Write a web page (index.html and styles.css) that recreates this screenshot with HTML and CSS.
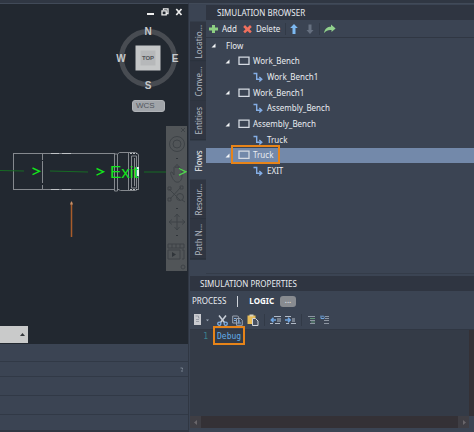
FILE: index.html
```html
<!DOCTYPE html>
<html lang="en">
<head>
<meta charset="utf-8">
<title>Simulation</title>
<link rel="stylesheet" href="styles.css">
</head>
<body>
<svg class="defs" aria-hidden="true">
  <symbol id="station" viewBox="0 0 12 10"><path d="M1 1.2h10v7.2H1z" fill="none" stroke="#d5dae2" stroke-width="1.3"/></symbol>
  <symbol id="route" viewBox="0 0 10 10"><path d="M.5 1.5h3.2v5.7h4.5M6.3 4.9 8.8 7.2 6.3 9.500" fill="none" stroke="#84aee6" stroke-width="1.4"/></symbol>
  <symbol id="caret" viewBox="0 0 5 5"><path d="M4.500.500v4H.5z" fill="#f4f6f8"/></symbol>
</svg>
<div class="app">
  <main class="left">
    <section class="canvas" aria-label="Drawing">
      <svg class="drawing" width="188" height="340" viewBox="0 4 188 340">
        <g fill="none" stroke="#85898e">
          <path d="M13.500 153.500H115M13.500 189.500H115M13.500 153v37" stroke-width="1"/>
          <path d="M42.500 154v6M42.500 161v22M42.500 185v5"/>
          <path d="M51 153.500h8M62 153.500h9M51 189.500h8M62 189.500h9" stroke="#c0c3c6"/>
          <path d="M114.500 154v37h3v-37zM117.500 154l2-1.500h16l3 2v5M117.500 189l3 1.500h15l3-1.500v-4" />
          <path d="M128.500 153v38M131.500 156h5v32h-5zM134.500 158v28M138.500 157v33" />
          <path d="M130 153.500h7M130 189.500h7" stroke-dasharray="2 1" stroke="#b8bbbe"/>
        </g>
        <path d="M0 170.500 24 171M50 171l38 1M144 172h25" fill="none" stroke="#176b24"/>
        <path d="M137 167h2v9h-2z" fill="#e8f5e8"/>
        <path d="M71.500 202v35" stroke="#a85c2b" stroke-width="1.500"/><path d="M70 204.500 71.500 201l1.500 3.500z" fill="#c8926a"/>
        <path d="M32.500 168l7 3.300-7 3.300M96.500 168.500l7 3.300-7 3.300" fill="none" stroke="#14e61c" stroke-width="1.400"/>
        <text class="exit" x="110" y="178">Exit</text>
      </svg>
      <div class="window-buttons">
        <button aria-label="Minimize"><svg width="8" height="8" viewBox="0 0 8 8"><path d="M0 5h7v2H0z" fill="#eee"/></svg></button>
        <button aria-label="Restore"><svg width="8" height="8" viewBox="0 0 8 8"><path d="M2.500 2V.8H7v4.700H5.500M1 2.800h4.200v4H1z" fill="none" stroke="#eee" stroke-width="1.300"/></svg></button>
        <button aria-label="Close"><svg width="8" height="8" viewBox="0 0 8 8"><path d="M1.300 1 6.500 7M6.500 1 1.300 7" stroke="#eee" stroke-width="1.700"/></svg></button>
      </div>
      <svg class="compass" width="66" height="66" viewBox="0 0 66 66">
        <circle cx="33" cy="33" r="26.500" fill="none" stroke="#484c52" stroke-width="5"/>
        <path d="M20.500 20.500h25v25h-25z" fill="#c5c7c8"/><path d="M25.500 25.500h15v15h-15z" fill="#b6b8ba"/>
        <g class="directions"><text x="33" y="10">N</text><text x="33" y="64">S</text><text x="6" y="37">W</text><text x="60" y="37">E</text></g>
        <text class="face" x="33" y="35">TOP</text>
      </svg>
      <button class="wcs">WCS</button>
      <svg class="navbar" width="21" height="145" viewBox="0 0 21 145" role="img" aria-label="Navigation bar">
        <path d="M0 0h21v145H0z" fill="#515558"/>
        <g fill="none" stroke="#3e4347" stroke-width="1">
          <path d="M15 2l4 4M19 2l-4 4"/>
          <circle cx="11" cy="18" r="7.500"/><circle cx="11" cy="18" r="4"/>
          <path d="M6 51c-2-4-2-5 0-5l2 3v-7c0-2 2-2 2 0v-2c0-2 2-2 2 0v2c0-2 2-2 2 0v2c0-2 2-1 2 0v6c0 7-7 9-10 1z"/>
          <path d="M3 63l11 11M15 61 4 73M2 61h3v3H2zM14 60h3v3h-3zM2 72h3v3H2z"/><circle cx="14" cy="71" r="3.500"/><path d="M16 74l3 2"/>
          <path d="M11 88v16M3 96h16M8.500 91 11 88l2.500 3M8.500 101l2.500 3 2.500-3M6 93.500 3 96l3 2.500M16 93.500l3 2.500-3 2.500"/>
          <path d="M2 118h16v4H2zM6 118v4M10 118v4M14 118v4M2 124h12v9H2zM16 124h2v9h-2"/>
          <circle cx="17" cy="141" r="2"/>
        </g>
        <path d="M10 32h2v1h-2zM10 82h2v1h-2zM10 109h2v1h-2zM6 126l4 2.500-4 2.500z" fill="#30353a"/>
        <path d="M13 42.500l7 3.300-7 3.300" fill="none" stroke="#50d64e" stroke-width="1.300"/>
      </svg>
      <button class="command-end" aria-label="Expand command history"><svg width="5" height="4" viewBox="0 0 5 4"><path d="M0 3 2.500 0 5 3z" fill="#34383c"/></svg></button>
    </section>
    <section class="rows" aria-label="Output">
      <div></div>
      <div><svg width="4" height="5" viewBox="0 0 4 5"><path d="M.5 1h2v1.500M1 4h2" fill="none" stroke="#798290"/></svg></div>
      <div></div><div></div><div></div>
    </section>
  </main>
  <div class="right">
    <section class="browser">
      <nav class="side-tabs" aria-label="Browser tabs">
        <button>Locatio...</button><button>Conve...</button><button>Entities</button><button class="active">Flows</button><button>Resour...</button><button>Path N...</button>
      </nav>
      <div class="browser-panel">
        <h2>SIMULATION BROWSER</h2>
        <div class="toolbar">
          <button><svg width="9" height="10" viewBox="0 0 9 10"><path d="M3 1h3v2.500h3v3H6V9H3V6.500H0v-3h3z" fill="#8cce82"/></svg><span>Add</span></button>
          <button class="delete"><svg width="9" height="10" viewBox="0 0 9 10"><path d="M2 1l2.500 2.500L7 1l1.800 2L6.500 5.200 8.800 7.500 7 9.300 4.500 7 2 9.300.2 7.500 2.500 5.200.2 3z" fill="#f0705e"/></svg><span>Delete</span></button>
          <i></i>
          <button aria-label="Move up"><svg width="8" height="10" viewBox="0 0 8 10"><path d="M4 0l3.800 4H5.500v6h-3V4H.2z" fill="#7db9f2"/></svg></button>
          <button class="down" aria-label="Move down"><svg width="8" height="10" viewBox="0 0 8 10"><path d="M4 10 .5 6h2V.5h3V6h2z" fill="#667080"/></svg></button>
          <i></i>
          <button aria-label="Go to"><svg width="12" height="10" viewBox="0 0 12 10"><path d="M0 9C.8 4.500 3.500 2.700 7 2.700V.5L11.600 4.500 7.500 8V6C4.500 5.700 2 6.500 0 9z" fill="#91d18d"/></svg></button>
        </div>
        <ul class="tree">
          <li class="l0"><svg class="caret"><use href="#caret"/></svg><span>Flow</span></li>
          <li class="l1"><svg class="caret"><use href="#caret"/></svg><svg class="station"><use href="#station"/></svg><span>Work_Bench</span></li>
          <li class="l2"><svg class="route"><use href="#route"/></svg><span>Work_Bench1</span></li>
          <li class="l1"><svg class="caret"><use href="#caret"/></svg><svg class="station"><use href="#station"/></svg><span>Work_Bench1</span></li>
          <li class="l2"><svg class="route"><use href="#route"/></svg><span>Assembly_Bench</span></li>
          <li class="l1"><svg class="caret"><use href="#caret"/></svg><svg class="station"><use href="#station"/></svg><span>Assembly_Bench</span></li>
          <li class="l2"><svg class="route"><use href="#route"/></svg><span>Truck</span></li>
          <li class="l1 selected"><svg class="caret"><use href="#caret"/></svg><svg class="station"><use href="#station"/></svg><span>Truck</span><b class="mark"></b></li>
          <li class="l2"><svg class="route"><use href="#route"/></svg><span>EXIT</span></li>
        </ul>
      </div>
    </section>
    <section class="properties">
      <h2>SIMULATION PROPERTIES</h2>
      <div class="prop-tabs"><button>PROCESS</button><i></i><button class="active">LOGIC</button><button class="more">...</button></div>
      <div class="edit-tools">
        <button aria-label="Document"><svg width="16" height="12" viewBox="0 0 16 12"><path d="M0 0h7v11H0z" fill="#c9cbd0"/><path d="M1.500 2h3v2h1M2 5.500h3M2 7.500h3" fill="none" stroke="#989da6"/><path d="M12 5.500h3l-1.500 1.700z" fill="#a0abbb"/></svg></button>
        <button class="cut" aria-label="Cut"><svg width="11" height="11" viewBox="0 0 11 11"><path d="M2 .5l5.500 7M9 .5l-5.500 7" stroke="#c8ced7" stroke-width="1.500"/><g fill="none" stroke="#7faee0" stroke-width="1.300"><circle cx="2.300" cy="8.700" r="1.600"/><circle cx="8.700" cy="8.700" r="1.600"/></g></svg></button>
        <button aria-label="Copy"><svg width="11" height="11" viewBox="0 0 11 11"><path d="M.7 1h5l1 1v6h-6zM4.500 3.500h4l1.800 1.800v5H4.500z" fill="#3c4555" stroke="#9aa3b0"/><path d="M2 3.500h2M2 5.500h2M6 6h2M6 8h3" stroke="#7faee0"/></svg></button>
        <button aria-label="Paste"><svg width="12" height="12" viewBox="0 0 12 12"><path d="M.5 1.500h8V10h-8z" fill="#e9bd57"/><path d="M2.500.5h4v2h-4z" fill="#d9d3bd"/><path d="M5.500 4.500h3l2.500 2.500v4.500H5.500z" fill="#4a5261" stroke="#d2d5da"/></svg></button>
        <i></i>
        <button aria-label="Decrease indent"><svg width="11" height="10" viewBox="0 0 11 10"><path d="M4 1.500h7M7 4h4M7 6h4M0 8.500h3M5 8.500h5" stroke="#b2bac7"/><path d="M1 5h5M3.500 2.800 1.300 5l2.200 2.200" fill="none" stroke="#6fa5e2" stroke-width="1.500"/></svg></button>
        <button aria-label="Increase indent"><svg width="11" height="10" viewBox="0 0 11 10"><path d="M0 1.500h6M7 4h3M7 6h3M1 8.500h3M6 8.500h5" stroke="#b2bac7"/><path d="M0 5h5M3 2.800 5.200 5 3 7.200" fill="none" stroke="#6fa5e2" stroke-width="1.500"/></svg></button>
        <i></i>
        <button aria-label="Comment"><svg width="9" height="10" viewBox="0 0 9 10"><path d="M1 1.500h7M3 5.500h5M3 8.500h5" stroke="#8d96a2"/><path d="M3 3.500h5M4 7h4" stroke="#639678"/></svg></button>
        <button aria-label="Uncomment"><svg width="10" height="10" viewBox="0 0 10 10"><path d="M5 1.500h4M5 3.500h4M4 5.500h5M4 8.500h5" stroke="#8d96a2"/><path d="M1 .5v3h3C5 1.500 3 0 1.500 2" fill="none" stroke="#70a6e0"/></svg></button>
      </div>
      <div class="editor">
        <span class="line">1</span>
        <div class="code"><textarea aria-label="Logic" spellcheck="false">Debug</textarea><b class="mark"></b></div>
        <div class="vscroll"></div>
      </div>
      <div class="hscroll"><button aria-label="Scroll left"><svg width="4" height="5" viewBox="0 0 4 5"><path d="M3 0v5L0 2.500z" fill="#69666a"/></svg></button><button aria-label="Scroll right"><svg width="4" height="5" viewBox="0 0 4 5"><path d="M1 0v5l3-2.500z" fill="#69666a"/></svg></button></div>
    </section>
  </div>
</div>
</body>
</html>
```
FILE: styles.css
```css
* { box-sizing: border-box; }
body { margin: 0; background: #3b4453; color: #e9ecf1; font: 8px/14px "Noto Sans", sans-serif; }
button { margin: 0; padding: 0; border: 0; background: none; color: inherit; font: inherit; display: flex; align-items: center; }
svg { display: block; flex: none; }
ul { margin: 0; padding: 0; list-style: none; }
h2 { margin: 0; font-size: 8px; font-weight: 400; line-height: 15px; background: #2f3541; }
.defs { position: absolute; width: 0; height: 0; }
.app { display: grid; grid-template-columns: 188px 1fr; min-height: 100vh; border-top: 3px solid #303743; }

.left { display: flex; flex-direction: column; border-top: 1px solid #414a58; }
.canvas { position: relative; background: #222830; height: 340px; overflow: hidden; }
.exit { font: 17px "Liberation Sans", sans-serif; fill: #14e61c; }
.window-buttons { position: absolute; top: 4px; right: 5px; display: flex; gap: 6px; }
.compass { position: absolute; top: 21px; right: 7px; }
.directions { font: bold 10px "Liberation Sans", sans-serif; fill: #c6c9cc; text-anchor: middle; }
.face { font: bold 6px "Liberation Sans", sans-serif; fill: #505357; text-anchor: middle; }
.wcs { position: absolute; top: 96px; right: 23px; width: 33px; height: 12px; padding-left: 3px; border-radius: 3px; background: #a1a5aa; border: 1px solid #b0b3b7; color: #51565d; font: 8px/10px "Liberation Sans", sans-serif; }
.navbar { position: absolute; top: 122px; right: 1px; }
.command-end { position: absolute; left: 0; bottom: 1px; width: 28px; height: 17px; background: #c9caca; justify-content: flex-end; padding-right: 3px; }
.rows { flex: 1; display: grid; grid-template-rows: 18px 15px 19px 19px 1fr; border-bottom: 2px solid #303743; }
.rows div { border-bottom: 1px solid #313946; display: flex; align-items: center; justify-content: flex-end; padding-right: 4px; }
.rows div:last-child { border: 0; }

.right { display: flex; flex-direction: column; min-width: 0; border-left: 1px solid #303743; border-top: 1px solid #414a58; }
.browser { display: grid; grid-template-columns: 17px 1fr; height: 270px; }
.side-tabs { display: grid; grid-template-rows: repeat(6, 1fr); height: 237px; margin-top: 18px; padding-left: 1px; }
.side-tabs button { writing-mode: vertical-rl; transform: rotate(180deg); justify-content: center; background: #303642; border-top: 1px solid #272e38; color: #b0b6c0; line-height: 15px; white-space: nowrap; }
.side-tabs .active { background: #3b4453; border: 0; color: #f0f2f5; }
.browser-panel { border-bottom: 1px solid #343c49; padding-top: 1px; }
.browser-panel h2 { padding-left: 11px; }
.toolbar { display: flex; align-items: center; height: 18px; padding-left: 3px; border-bottom: 1px solid #303743; }
.toolbar span { padding-left: 4px; }
.toolbar .delete { margin-left: 6px; }
.toolbar i { width: 1px; height: 12px; background: #323a47; margin: 0 4px 0 5px; }
.toolbar .down { margin-left: 8px; }
.tree { display: grid; grid-template-rows: repeat(9, 1fr); height: 141px; }
.tree li { display: flex; align-items: center; position: relative; }
.caret { width: 5px; height: 5px; }
.station { width: 12px; height: 10px; margin: 0 3px 0 8px; }
.route { width: 10px; height: 10px; margin-right: 4px; }
.l0 { padding-left: 5px; }
.l0 span { padding-left: 10px; }
.l1 { padding-left: 19px; }
.l2 { padding-left: 47px; }
.selected { background: #7389aa; }
.mark { position: absolute; border: 2px solid #e78419; pointer-events: none; }
.selected .mark { left: 25px; width: 49px; top: -3px; bottom: -1px; }

.properties { flex: 1; display: flex; flex-direction: column; padding: 2px 0 4px 1px; }
.properties h2 { padding-left: 10px; }
.prop-tabs { display: flex; align-items: center; height: 20px; padding-left: 2px; }
.prop-tabs i { width: 1px; height: 11px; margin: 0 11px; background: #d0d4da; }
.prop-tabs .active { font-weight: 700; color: #fff; }
.prop-tabs .more { width: 16px; height: 11px; margin-left: 6px; border-radius: 3px; background: #888b90; justify-content: center; line-height: 8px; padding-bottom: 3px; }
.edit-tools { display: flex; align-items: center; height: 18px; padding-left: 4px; gap: 4px; }
.edit-tools .cut { margin-left: 3px; }
.edit-tools i { width: 1px; height: 12px; margin: 0 1px; background: #323a47; }
.editor { flex: 1; display: grid; grid-template-columns: 18px 1fr 5px; background: #343b47; border-top: 1px solid #303743; font: 8px/12px "DejaVu Sans Mono", monospace; }
.line { color: #3b8491; text-align: right; padding-top: 1px; }
.code { position: relative; display: flex; padding-left: 9px; }
.code textarea { flex: 1; min-width: 0; border: 0; outline: 0; padding: 1px 0; resize: none; background: none; color: #63ace6; font: inherit; overflow: hidden; }
.code .mark { left: 5px; top: -4px; width: 32px; height: 19px; }
.vscroll { background: #343136; }
.hscroll { display: flex; justify-content: space-between; height: 12px; margin-right: 5px; background: #343136; }
.hscroll button { width: 11px; justify-content: center; background: #3f3e44; }
```
